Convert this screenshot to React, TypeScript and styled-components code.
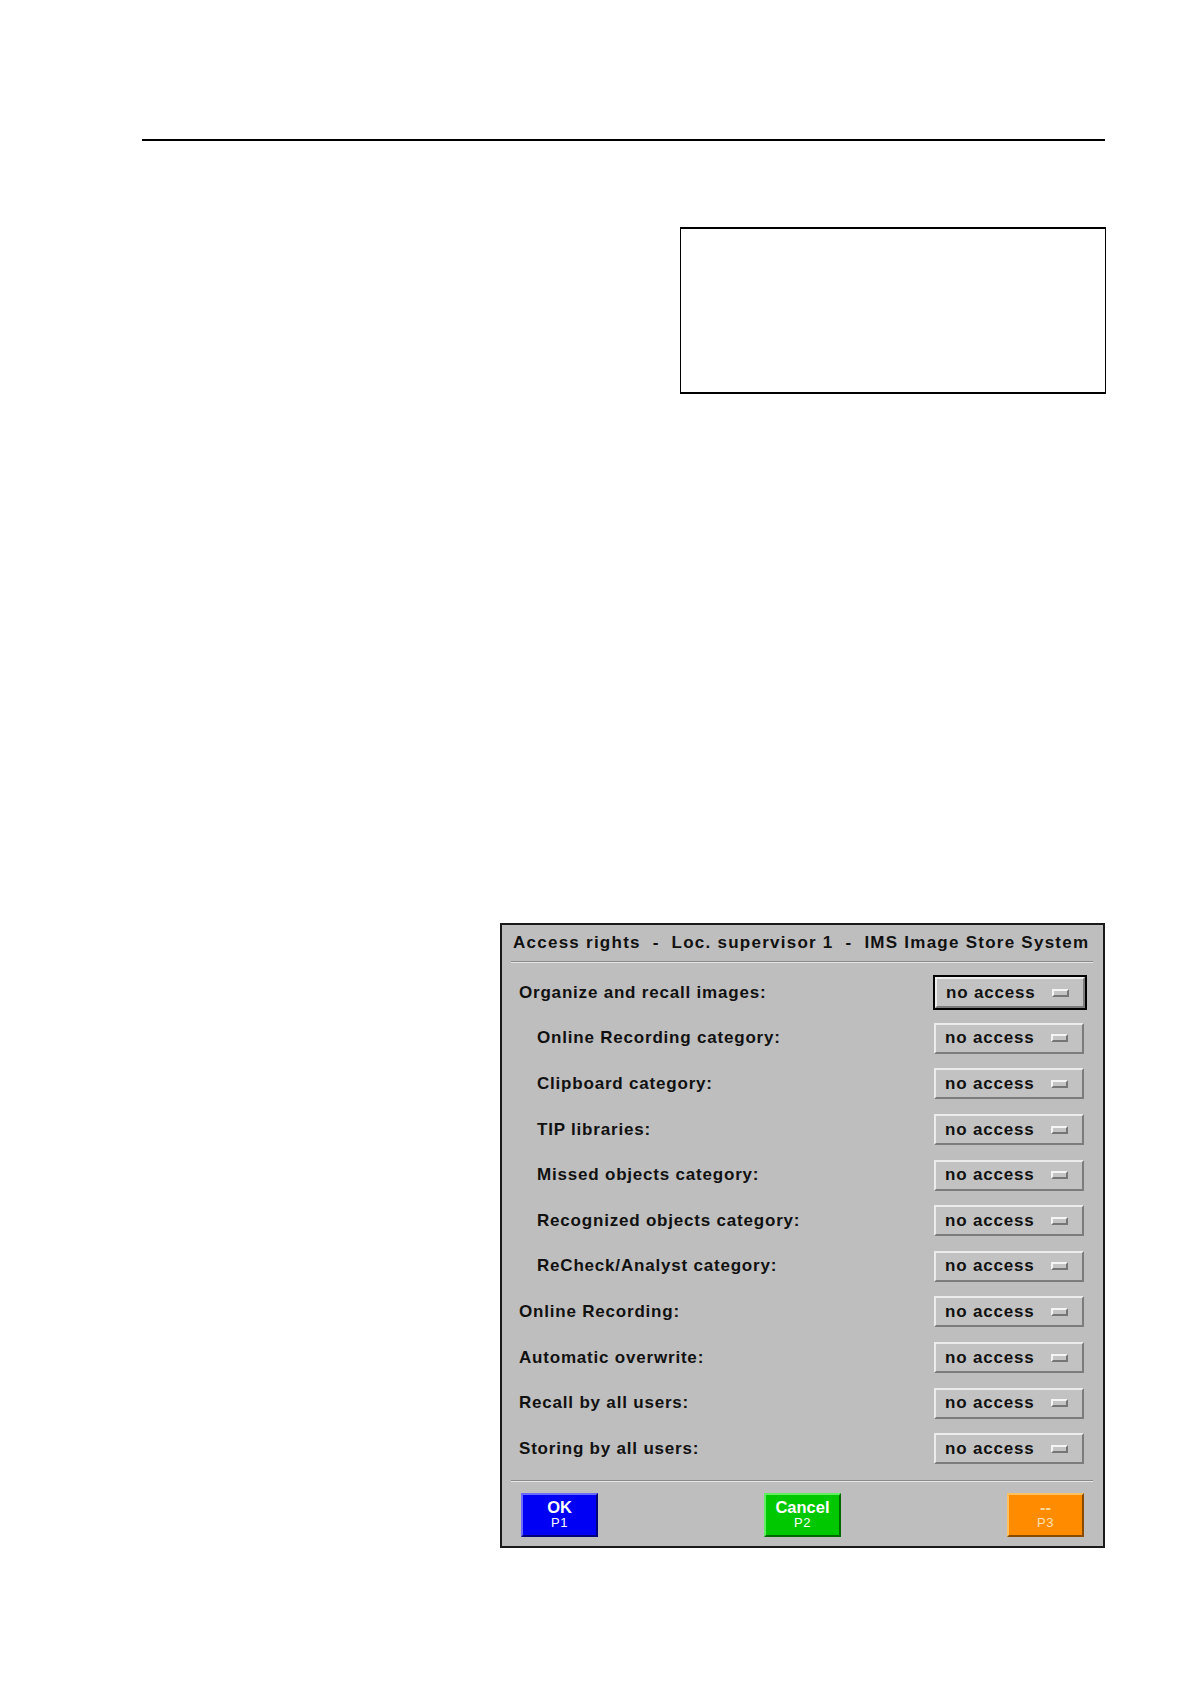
import React from "react";
import styled, { createGlobalStyle } from "styled-components";

const Global = createGlobalStyle`
  html, body { margin: 0; padding: 0; background: #ffffff; }
  body { font-family: "Liberation Sans", Arial, sans-serif; }
`;

const Page = styled.div`
  width: 1190px;
  min-height: 1684px;
  padding-top: 139px;
  box-sizing: border-box;
  display: flex;
  flex-direction: column;
`;

const HeaderRule = styled.div`
  margin-left: 142px;
  width: 963px;
  height: 2px;
  background: #000;
`;

const NoteBox = styled.div`
  margin-top: 86px;
  margin-left: 680px;
  width: 426px;
  height: 167px;
  box-sizing: border-box;
  border: 1px solid #000;
  border-top-width: 2px;
  border-bottom-width: 2px;
`;

const Dialog = styled.div`
  margin-top: 529px;
  margin-left: 500px;
  width: 605px;
  height: 625px;
  box-sizing: border-box;
  border: 2px solid #1a1a1a;
  background: #bebebe;
  display: flex;
  flex-direction: column;
  padding: 8px 0 10px;
  font-family: "Liberation Sans", Arial, sans-serif;
  font-weight: bold;
  color: #111;
`;

const Title = styled.div`
  height: 20px;
  line-height: 20px;
  padding-left: 11px;
  font-size: 17px;
  letter-spacing: 1.25px;
  white-space: pre;
`;

const Groove = styled.div<{ $top: number; $bottom: number }>`
  margin: ${(p) => p.$top}px 10px ${(p) => p.$bottom}px 9px;
  height: 0;
  border-top: 1px solid #8a8a8a;
  border-bottom: 1px solid #e6e6e6;
`;

const Rows = styled.div`
  display: flex;
  flex-direction: column;
`;

const Row = styled.div<{ $indent: boolean }>`
  height: 45.6px;
  display: flex;
  align-items: center;
  justify-content: space-between;
  padding-left: ${(p) => (p.$indent ? 35 : 17)}px;
  padding-right: 19px;
`;

const Label = styled.span`
  font-size: 17px;
  letter-spacing: 0.8px;
  white-space: pre;
`;

const Focus = styled.span`
  display: flex;
  border: 2px solid #000;
  margin-right: -3px;
`;

const Option = styled.span`
  width: 150px;
  height: 31px;
  box-sizing: border-box;
  display: flex;
  align-items: center;
  justify-content: space-between;
  padding: 0 14px 0 9px;
  background: #c2c2c2;
  border-top: 2px solid #ececec;
  border-left: 2px solid #ececec;
  border-bottom: 2px solid #7c7c7c;
  border-right: 2px solid #7c7c7c;
  font-size: 17px;
  letter-spacing: 0.8px;
  white-space: pre;
`;

const Indicator = styled.span`
  width: 17px;
  height: 8px;
  box-sizing: border-box;
  background: #c4c4c4;
  border-top: 2px solid #f4f4f4;
  border-left: 2px solid #f4f4f4;
  border-bottom: 2px solid #767676;
  border-right: 2px solid #767676;
`;

const Buttons = styled.div`
  display: flex;
  justify-content: space-between;
  padding: 0 19px 0 19px;
`;

const KeyButton = styled.button<{ $bg: string; $light: string; $dark: string }>`
  width: 77px;
  height: 44px;
  box-sizing: border-box;
  padding: 0;
  margin: 0;
  display: flex;
  flex-direction: column;
  align-items: center;
  justify-content: center;
  background: ${(p) => p.$bg};
  border-top: 2px solid ${(p) => p.$light};
  border-left: 2px solid ${(p) => p.$light};
  border-bottom: 2px solid ${(p) => p.$dark};
  border-right: 2px solid ${(p) => p.$dark};
  color: #fff;
  font-family: "Liberation Sans", Arial, sans-serif;
  cursor: default;
`;

const KeyMain = styled.span<{ $color?: string }>`
  font-size: 16.5px;
  font-weight: bold;
  line-height: 17px;
  color: ${(p) => p.$color || "#fff"};
`;

const KeySub = styled.span<{ $color?: string }>`
  font-size: 13px;
  font-weight: normal;
  line-height: 14px;
  letter-spacing: 0.5px;
  color: ${(p) => p.$color || "#fff"};
`;

const rows: { label: string; indent: boolean; focus?: boolean }[] = [
  { label: "Organize and recall images:", indent: false, focus: true },
  { label: "Online Recording category:", indent: true },
  { label: "Clipboard category:", indent: true },
  { label: "TIP libraries:", indent: true },
  { label: "Missed objects category:", indent: true },
  { label: "Recognized objects category:", indent: true },
  { label: "ReCheck/Analyst category:", indent: true },
  { label: "Online Recording:", indent: false },
  { label: "Automatic overwrite:", indent: false },
  { label: "Recall by all users:", indent: false },
  { label: "Storing by all users:", indent: false },
];

const Select = () => (
  <Option>
    no access
    <Indicator />
  </Option>
);

export default function App() {
  return (
    <>
      <Global />
      <Page>
        <HeaderRule />
        <NoteBox />
        <Dialog>
          <Title>{"Access rights  -  Loc. supervisor 1  -  IMS Image Store System"}</Title>
          <Groove $top={8} $bottom={7} />
          <Rows>
            {rows.map((r) => (
              <Row key={r.label} $indent={r.indent}>
                <Label>{r.label}</Label>
                {r.focus ? (
                  <Focus>
                    <Select />
                  </Focus>
                ) : (
                  <Select />
                )}
              </Row>
            ))}
          </Rows>
          <Groove $top={8} $bottom={11} />
          <Buttons>
            <KeyButton $bg="#0000f4" $light="#6a6aff" $dark="#00007a">
              <KeyMain>OK</KeyMain>
              <KeySub>P1</KeySub>
            </KeyButton>
            <KeyButton $bg="#00c800" $light="#5ef05e" $dark="#006a00">
              <KeyMain>Cancel</KeyMain>
              <KeySub>P2</KeySub>
            </KeyButton>
            <KeyButton $bg="#ff8c00" $light="#ffc060" $dark="#8a4a00">
              <KeyMain $color="#ffd59a">--</KeyMain>
              <KeySub $color="#ffe0b8">P3</KeySub>
            </KeyButton>
          </Buttons>
        </Dialog>
      </Page>
    </>
  );
}
